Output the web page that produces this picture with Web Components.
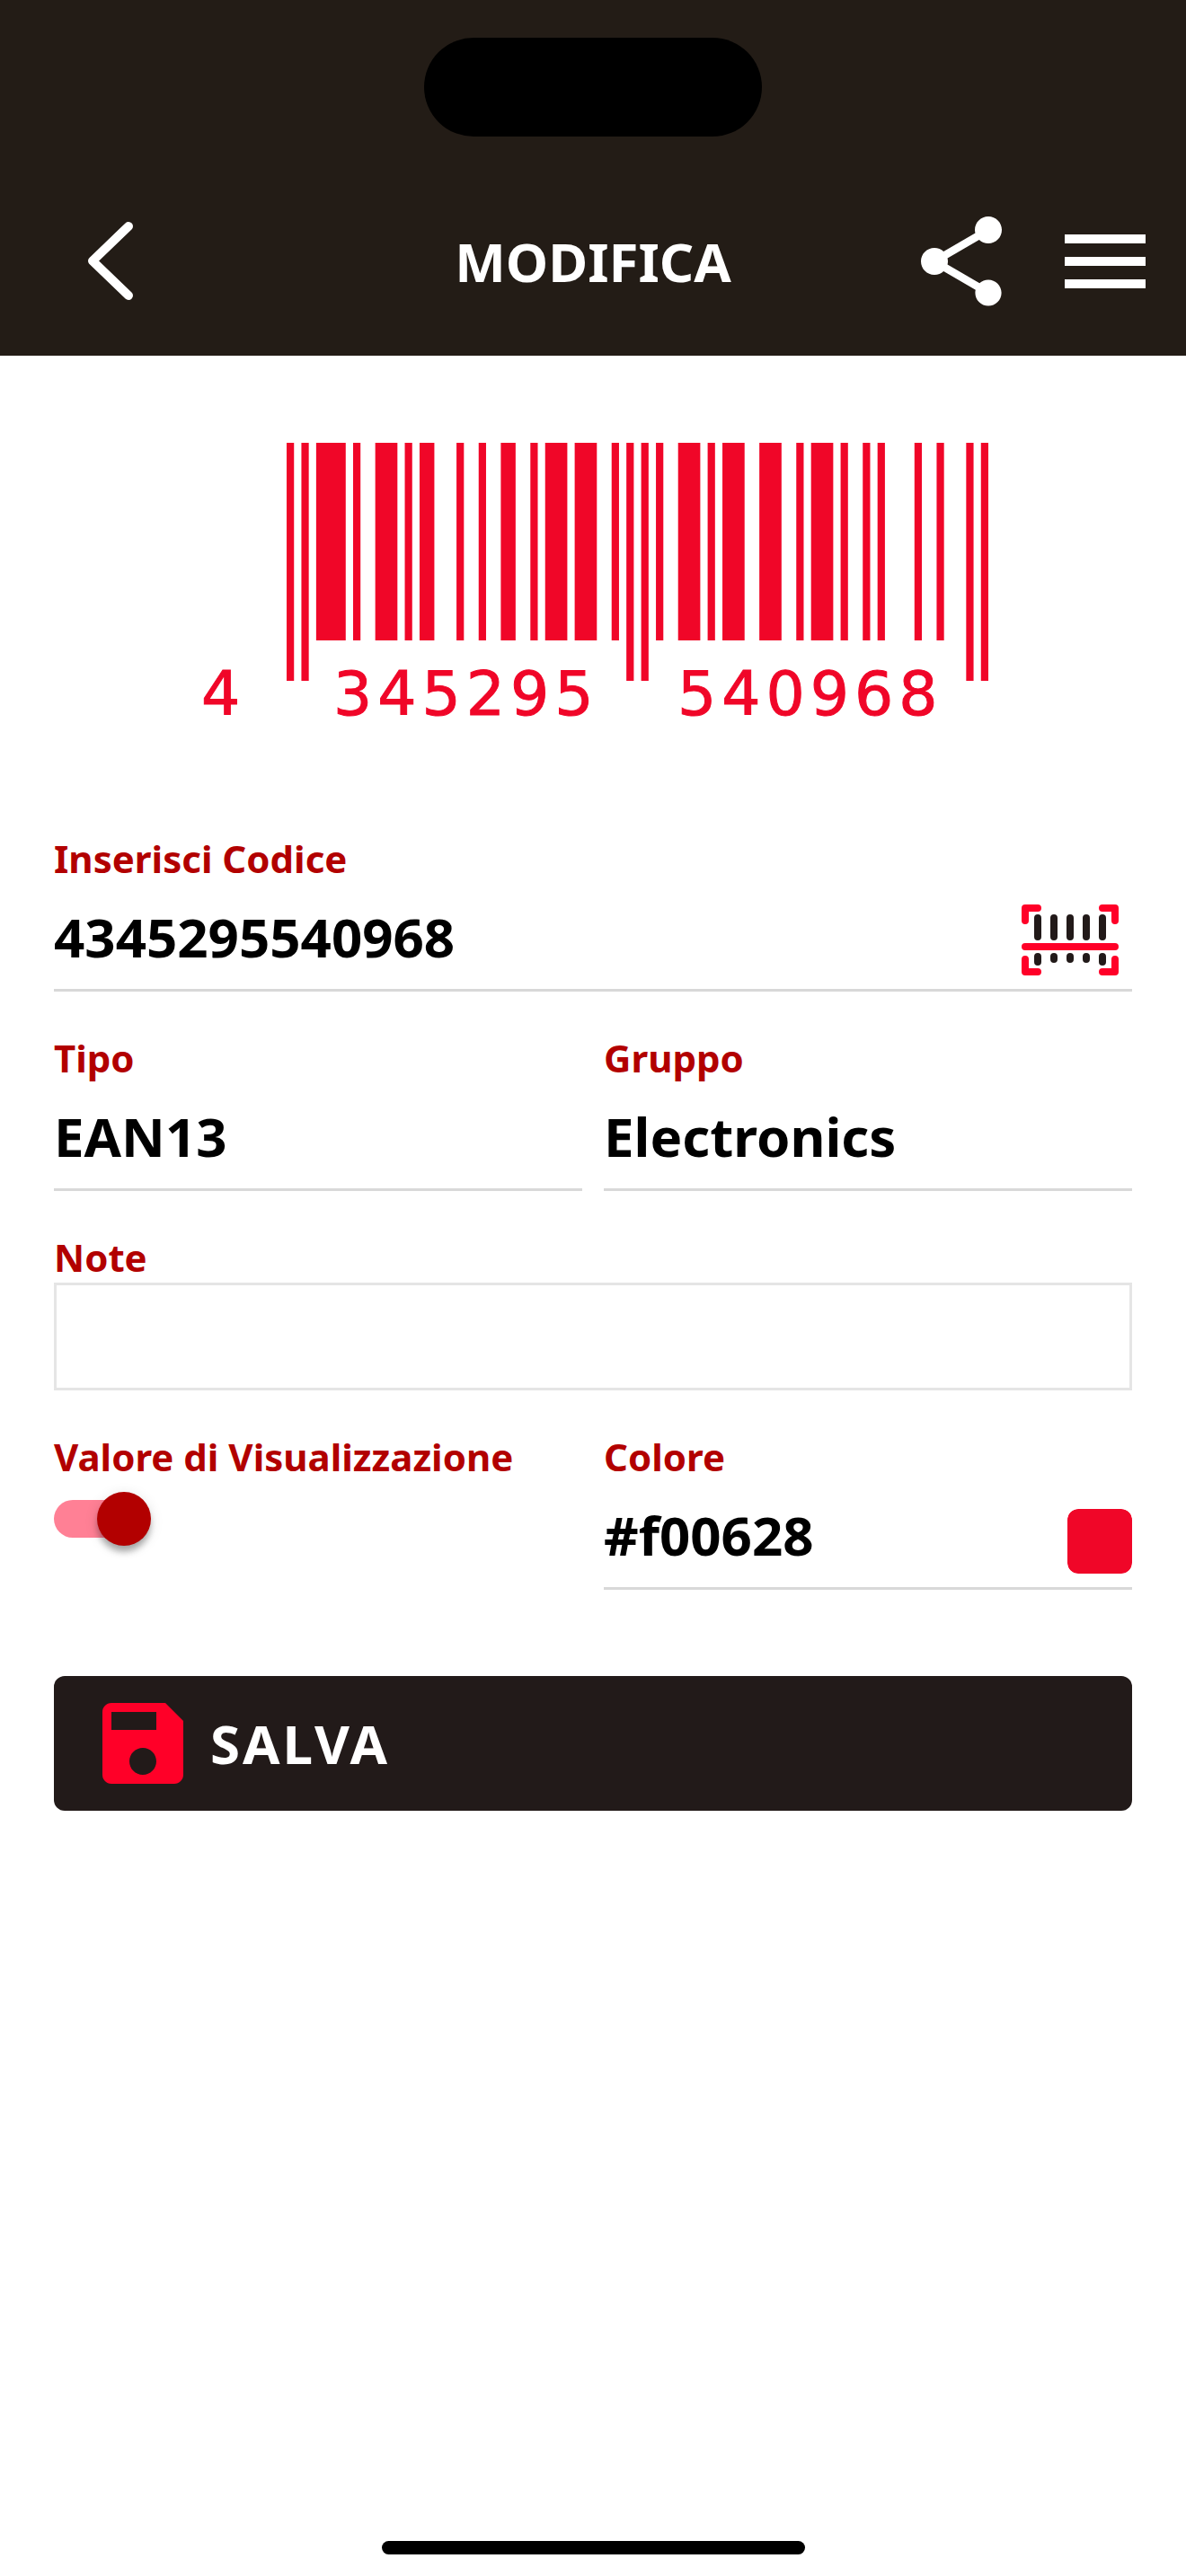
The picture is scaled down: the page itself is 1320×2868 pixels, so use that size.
<!DOCTYPE html>
<html lang="it">
<head>
<meta charset="utf-8">
<meta name="viewport" content="width=device-width">
<title>Modifica</title>
<style>
  html, body { margin: 0; min-height: 100%; }
  body {
    background: #fff;
    color: #000;
    font-family: "Noto Sans", sans-serif;
    --brand: #ff0028;
    --code: #f00628;
    --label: #b20000;
    --dark: #221a19;
    --header: #231c16;
    --line: #d8d8d8;
  }
</style>
</head>
<body>
<edit-screen></edit-screen>
<script>
const define = (name, html, setup) => customElements.define(name, class extends HTMLElement {
  constructor() {
    super();
    const t = document.createElement('template');
    t.innerHTML = html;
    this.attachShadow({ mode: 'open' }).append(t.content.cloneNode(true));
  }
  connectedCallback() { if (setup) setup(this, this.shadowRoot); }
});

define('app-header', `
<style>
  :host { display: block; background: var(--header); color: #fff; }
  .status { box-sizing: border-box; height: 186px; padding-top: 42px; }
  .island { width: 376px; height: 110px; margin: 0 auto; border-radius: 55px; background: #000; }
  .bar { display: grid; grid-template-columns: 1fr auto 1fr; align-items: center; height: 210px; padding: 0 30px; }
  h1 { margin: 0; font-size: 60px; line-height: 82px; font-weight: 700; }
  button { display: block; width: 120px; height: 120px; padding: 0; border: 0; background: none; color: inherit; }
  svg { display: block; width: 100%; height: 100%; }
  .back { margin-left: 33px; }
  .actions { display: flex; justify-content: flex-end; gap: 40px; }
</style>
<header>
  <div class="status"><div class="island"></div></div>
  <div class="bar">
    <button class="back" aria-label="Indietro"><svg viewBox="0 0 120 120"><path d="M80 21 40 59.500 80 98" fill="none" stroke="currentColor" stroke-width="10" stroke-linecap="round" stroke-linejoin="round"/></svg></button>
    <h1><slot></slot></h1>
    <div class="actions">
      <button aria-label="Condividi"><svg viewBox="0 0 24 24" fill="currentColor"><path d="M18 16.080c-.76 0-1.440.3-1.960.77L8.910 12.700c.05-.23.090-.46.090-.7s-.04-.47-.09-.7l7.050-4.110c.54.5 1.250.81 2.040.81 1.660 0 3-1.340 3-3s-1.340-3-3-3-3 1.340-3 3c0 .24.040.47.090.7L8.040 9.810C7.500 9.310 6.790 9 6 9c-1.660 0-3 1.340-3 3s1.340 3 3 3c.79 0 1.500-.31 2.040-.81l7.120 4.160c-.05.21-.08.43-.08.650 0 1.610 1.310 2.920 2.920 2.920s2.920-1.310 2.920-2.920-1.310-2.920-2.920-2.920z"/></svg></button>
      <button aria-label="Menu"><svg viewBox="0 0 24 24" fill="currentColor"><path d="M3 18h18v-2H3v2zm0-5h18v-2H3v2zm0-7v2h18V6H3z"/></svg></button>
    </div>
  </div>
</header>`);

/* EAN-13 symbol drawn from the digits in the "value" attribute. */
define('ean-barcode', `
<style>
  :host { display: block; }
  svg { display: block; width: 880px; max-width: 100%; margin: 0 auto; fill: var(--code); overflow: visible; }
  text { font-family: "DejaVu Sans", sans-serif; font-size: 68px; letter-spacing: 6px; stroke: var(--code); stroke-width: 1px; }
</style>
<svg viewBox="0 0 880 320" role="img"><g></g><text x="4" y="303"></text><text x="151" y="303"></text><text x="534" y="303"></text></svg>`,
(host, root) => {
  const v = host.getAttribute('value');
  const L = ['0001101','0011001','0010011','0111101','0100011','0110001','0101111','0111011','0110111','0001011'];
  const parity = ['LLLLLL','LLGLGG','LLGGLG','LLGGGL','LGLLGG','LGGLLG','LGGGLL','LGLGLG','LGLGGL','LGGLGL'][v[0]];
  const flip = s => s.replace(/./g, c => 1 - c);
  const left = [...v.slice(1, 7)].map((d, i) => parity[i] === 'L' ? L[d] : [...flip(L[d])].reverse().join('')).join('');
  const right = [...v.slice(7)].map(d => flip(L[d])).join('');
  const bits = '101' + left + '01010' + right + '101';
  const unit = 781 / 95;
  let out = '';
  for (const m of bits.matchAll(/1+/g)) {
    const guard = m.index < 3 || (m.index > 44 && m.index < 50) || m.index > 91;
    out += `<rect x="${99 + m.index * unit}" y="0" width="${m[0].length * unit}" height="${guard ? 265 : 220}"/>`;
  }
  root.querySelector('g').innerHTML = out;
  root.querySelector('svg').setAttribute('aria-label', v);
  [v[0], v.slice(1, 7), v.slice(7)].forEach((s, i) => root.querySelectorAll('text')[i].textContent = s);
});

define('form-field', `
<style>
  :host { display: block; flex: 1 1 0; min-width: 0; }
  label { display: block; color: var(--label); font-size: 42px; line-height: 57px; font-weight: 700; }
  .control { display: flex; align-items: flex-end; box-sizing: border-box; height: 120px; border-bottom: 3px solid var(--line); }
  :host([kind=note]) .control { border: 3px solid #e5e5e5; }
  input, select {
    flex: 1; min-width: 0; height: 100%; margin: 0; padding: 0; border: 0; border-radius: 0; outline: 0;
    appearance: none; background: none; color: #000; font: 700 60px/82px "Noto Sans", sans-serif;
  }
</style>
<label for="c"></label>
<div class="control"><slot name="end"></slot></div>`,
(host, root) => {
  root.querySelector('label').textContent = host.getAttribute('label');
  const value = host.getAttribute('value') || '';
  let c;
  if (host.getAttribute('kind') === 'select') {
    c = document.createElement('select');
    c.add(new Option(value));
  } else {
    c = document.createElement('input');
    c.type = 'text';
    c.value = value;
  }
  c.id = 'c';
  root.querySelector('.control').prepend(c);
});

define('switch-field', `
<style>
  :host { display: block; flex: 1 1 0; min-width: 0; }
  label { display: block; color: var(--label); font-size: 42px; line-height: 57px; font-weight: 700; white-space: nowrap; }
  input { display: block; position: relative; appearance: none; width: 102px; height: 42px; margin: 20px 0 0; border-radius: 21px; background: #ff8095; }
  input::before {
    content: ""; position: absolute; top: -9px; left: -6px; width: 60px; height: 60px; border-radius: 50%; background: #fff;
    box-shadow: 0 9px 9px -3px rgba(0,0,0,.2), 0 6px 6px rgba(0,0,0,.14), 0 3px 15px rgba(0,0,0,.12);
  }
  input:checked::before { left: 48px; background: var(--label); }
</style>
<label for="c"><slot></slot></label>
<input id="c" type="checkbox" role="switch" checked>`);

define('scan-button', `
<style>
  :host { display: block; margin: 0 15px 15px; }
  button { display: block; padding: 0; border: 0; background: none; }
  svg { display: block; width: 108px; height: 79px; fill: none; stroke-linecap: round; stroke-linejoin: round; stroke-width: 8px; }
</style>
<button aria-label="Scansiona"><svg viewBox="0 0 108 79">
  <path stroke="#ff0028" d="M4 18V4H18M90 4h14v14M4 61v14h14M90 75h14V61M4 47h100"/>
  <path stroke="#221a19" d="M18 15v21M36 15v21M54 15v21M72 15v21M90 15v21M18 58v6M36 58v3M54 58v3M72 58v3M90 58v6"/>
</svg></button>`);

define('color-swatch', `
<style>
  :host { display: block; margin-bottom: 15px; }
  input { display: block; appearance: none; width: 72px; height: 72px; padding: 0; border: 0; border-radius: 12px; overflow: hidden; background: none; }
  input::-webkit-color-swatch-wrapper { padding: 0; }
  input::-webkit-color-swatch { border: 0; border-radius: 12px; }
</style>
<input type="color" value="#f00628" aria-label="Scegli colore">`);

define('save-button', `
<style>
  :host { display: block; }
  button {
    display: flex; align-items: center; gap: 15px; width: 100%; height: 150px; padding: 0 39px; border: 0; border-radius: 12px;
    background: var(--dark); color: #fff; font: 700 60px/82px "Noto Sans", sans-serif; letter-spacing: 3px;
  }
  svg { width: 120px; height: 120px; fill: var(--brand); }
</style>
<button><svg viewBox="0 0 24 24"><path d="M17 3H5c-1.110 0-2 .9-2 2v14c0 1.100.89 2 2 2h14c1.100 0 2-.9 2-2V7l-4-4zm-5 16c-1.660 0-3-1.340-3-3s1.340-3 3-3 3 1.340 3 3-1.340 3-3 3zm3-10H5V5h10v4z"/></svg><span><slot></slot></span></button>`);

define('edit-screen', `
<style>
  :host { display: flex; flex-direction: column; min-height: 100vh; }
  main { flex: 1; padding: 97px 60px 60px; }
  ean-barcode { margin-bottom: 114px; }
  form { display: flex; flex-direction: column; gap: 45px; }
  .row { display: flex; gap: 24px; }
  save-button { margin-top: 51px; }
  .home { flex: none; width: 471px; height: 15px; margin: 0 auto 24px; border-radius: 8px; background: #000; }
</style>
<app-header>MODIFICA</app-header>
<main>
  <ean-barcode value="4345295540968"></ean-barcode>
  <form onsubmit="return false">
    <form-field label="Inserisci Codice" value="4345295540968"><scan-button slot="end"></scan-button></form-field>
    <div class="row">
      <form-field kind="select" label="Tipo" value="EAN13"></form-field>
      <form-field kind="select" label="Gruppo" value="Electronics"></form-field>
    </div>
    <form-field kind="note" label="Note"></form-field>
    <div class="row">
      <switch-field>Valore di Visualizzazione</switch-field>
      <form-field label="Colore" value="#f00628"><color-swatch slot="end"></color-swatch></form-field>
    </div>
    <save-button>SALVA</save-button>
  </form>
</main>
<div class="home"></div>`);
</script>
</body>
</html>
